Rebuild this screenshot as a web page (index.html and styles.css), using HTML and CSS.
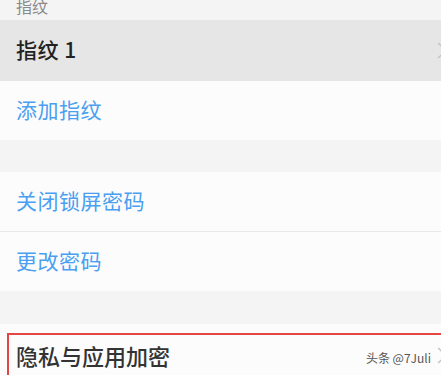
FILE: index.html
```html
<!DOCTYPE html>
<html lang="zh-CN">
<head>
  <meta charset="UTF-8" />
  <title>指纹与密码</title>
  <link rel="stylesheet" href="styles.css">
</head>
<body>
  <div class="settings">
    <div class="group-title"><span>指纹</span></div>
    <div class="row row-pressed">
      <span class="label">指纹 1</span>
      <svg class="chevron" viewBox="0 0 10 18"><path d="M1 1 L9 9 L1 17" /></svg>
    </div>
    <div class="row">
      <span class="label link">添加指纹</span>
    </div>

    <div class="gap"></div>

    <div class="row divided">
      <span class="label link">关闭锁屏密码</span>
    </div>
    <div class="row">
      <span class="label link">更改密码</span>
    </div>

    <div class="gap"></div>

    <div class="row row-marked">
      <span class="label">隐私与应用加密</span>
      <span class="watermark">头条 @7Juli</span>
      <svg class="chevron" viewBox="0 0 10 18"><path d="M1 1 L9 9 L1 17" /></svg>
    </div>
  </div>
</body>
</html>
```

FILE: styles.css
```css
html,
body {
  overflow: hidden;
}

body {
  margin: 0;
  background: #f4f4f4;
  font-family: "Noto Sans CJK SC", "Noto Sans", sans-serif;
  color: #222;
}

.settings {
  display: flex;
  flex-direction: column;
}

.group-title {
  height: 20px;
  overflow: hidden;
  padding-left: 16px;
  font-size: 16px;
  line-height: 16px;
  color: #8a8a8a;
}

.group-title span {
  display: block;
  margin-top: -2px;
}

.row {
  display: flex;
  align-items: center;
  height: 59px;
  padding-left: 16px;
  background: #fcfcfc;
}

.row-pressed {
  height: 61px;
  background: #e6e6e6;
}

.label {
  font-size: 21px;
  line-height: 24px;
  font-weight: 500;
  letter-spacing: 0.5px;
  padding-bottom: 3px;
}

.link {
  color: #4a9ff0;
  font-weight: 400;
}

.divided {
  height: 60px;
  box-sizing: border-box;
  border-bottom: 1px solid #e8e8e8;
}

.gap {
  height: 32px;
}

.chevron {
  width: 10px;
  height: 17px;
  margin-left: auto;
  margin-right: -6px;
  fill: none;
  stroke: #c4c4c4;
  stroke-width: 1.5;
}

.row-marked {
  position: relative;
  height: 64px;
  align-items: flex-start;
  padding-top: 19px;
  box-sizing: border-box;
  margin-top: 1px;
}

.row-marked::after {
  content: "";
  position: absolute;
  top: 9px;
  left: 7px;
  right: -10px;
  bottom: -10px;
  border: 2px solid #e64545;
}

.row-marked .label {
  color: #333;
  font-size: 22px;
  letter-spacing: 0;
}

.row-marked .watermark {
  margin-left: auto;
  margin-top: 6px;
  font-size: 12px;
  color: #555;
}

.row-marked .chevron {
  margin-left: 6px;
  margin-top: 4px;
}
```
